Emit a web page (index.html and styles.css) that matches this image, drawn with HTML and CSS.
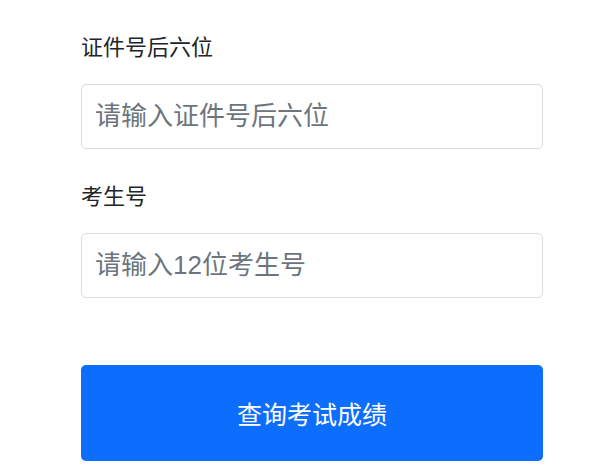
FILE: index.html
```
<!DOCTYPE html>
<html lang="zh-CN">
<head>
<meta charset="utf-8">
<title>查询考试成绩</title>
<link rel="stylesheet" href="styles.css">
</head>
<body>
<form class="form">
  <div class="field">
    <label class="label" for="idcard">证件号后六位</label>
    <input class="input" id="idcard" type="text" placeholder="请输入证件号后六位">
  </div>
  <div class="field">
    <label class="label" for="examno">考生号</label>
    <input class="input" id="examno" type="text" placeholder="请输入12位考生号">
  </div>
  <button class="btn" type="button">查询考试成绩</button>
</form>
</body>
</html>
```
FILE: styles.css
```
html, body {
  margin: 0;
  padding: 0;
  background: #ffffff;
}
body {
  font-family: "Liberation Sans", "Noto Sans CJK SC", sans-serif;
  color: #212529;
}
.form {
  display: flex;
  flex-direction: column;
  width: 462px;
  padding: 31px 0 0 81px;
}
.field {
  display: flex;
  flex-direction: column;
  margin-bottom: 31px;
}
.label {
  font-size: 22px;
  line-height: 33px;
  margin-bottom: 20px;
  color: #212529;
}
.input {
  box-sizing: border-box;
  height: 65px;
  width: 100%;
  border: 1px solid #d9dde2;
  border-radius: 5px;
  padding: 0 13px;
  font-family: inherit;
  font-size: 26px;
  color: #212529;
  background: #fff;
  outline: none;
}
.input::placeholder {
  color: #6c757d;
  opacity: 1;
}
.btn {
  margin-top: 36px;
  box-sizing: border-box;
  height: 96px;
  width: 100%;
  border: 0;
  border-radius: 5px;
  background: #0d6efd;
  color: #ffffff;
  font-family: inherit;
  font-size: 25px;
}
```
